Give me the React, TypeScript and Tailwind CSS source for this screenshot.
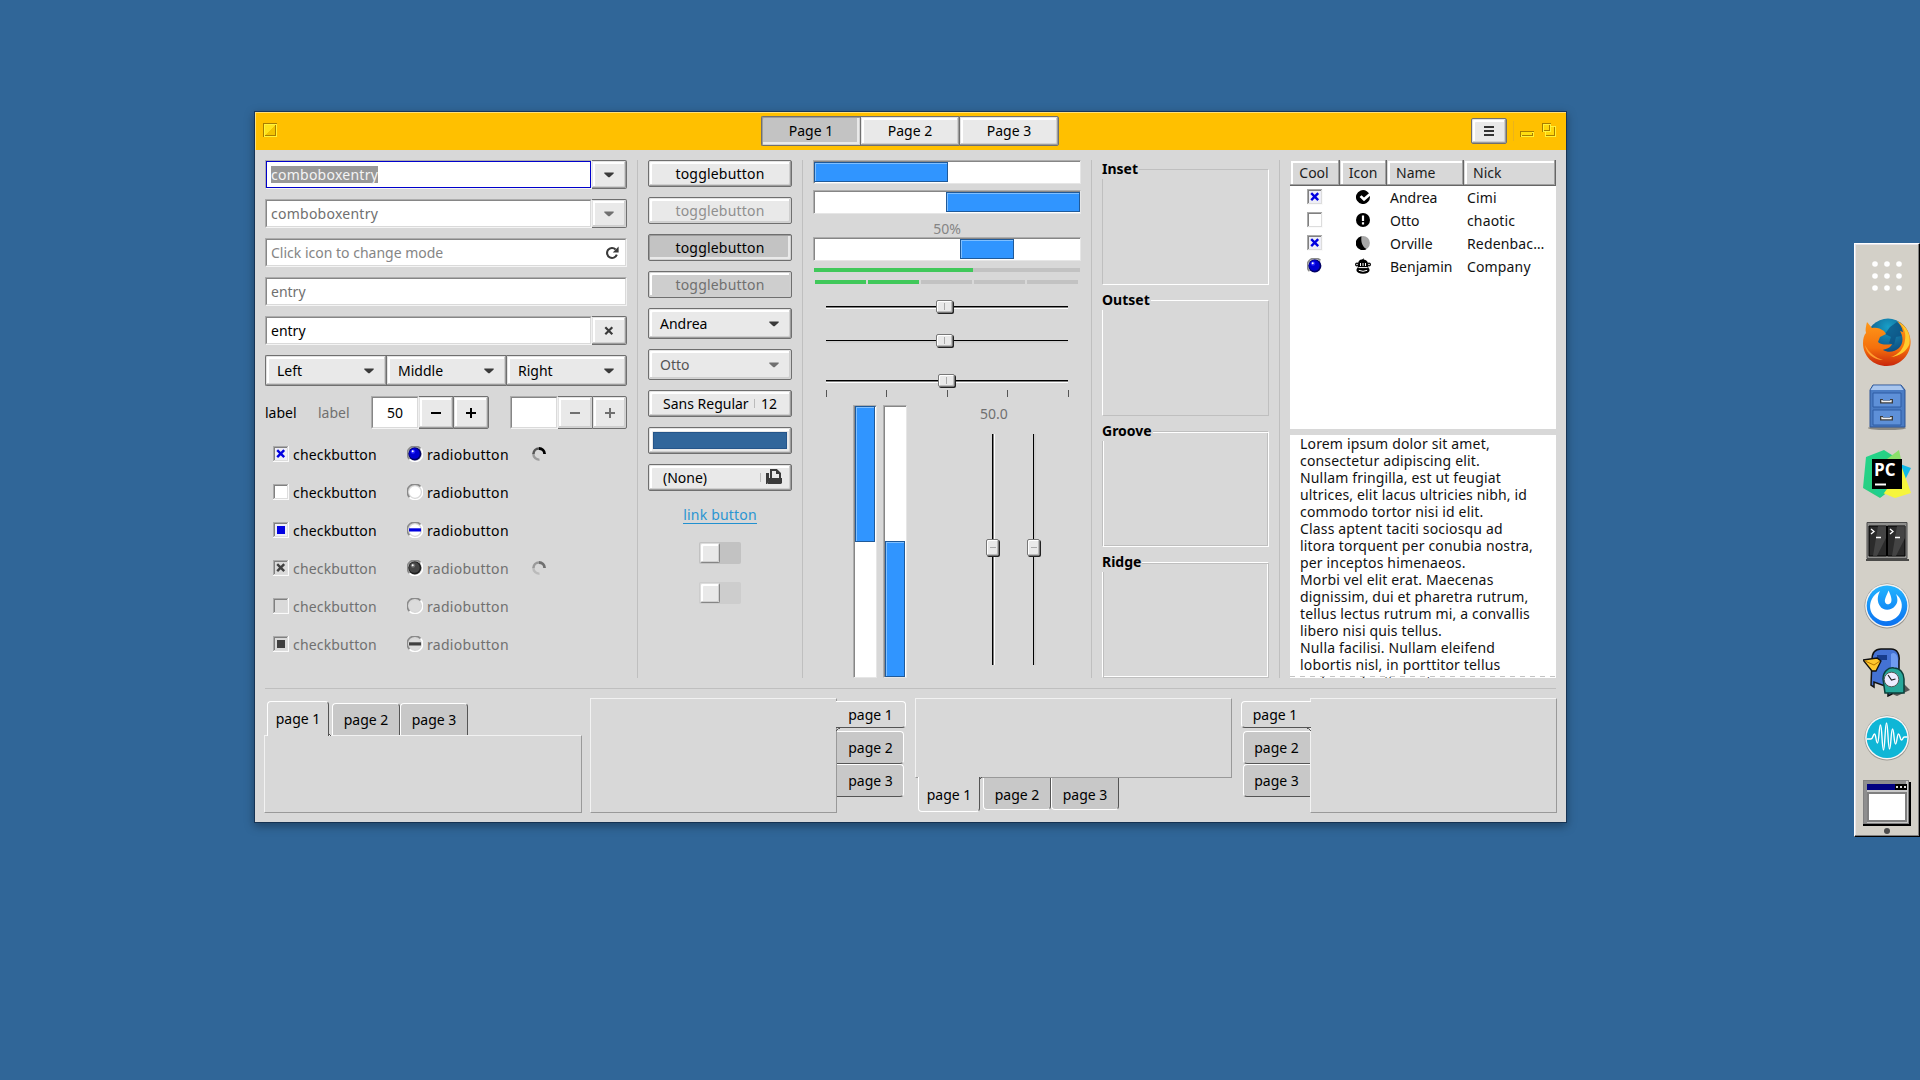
import React from "react";

type Kids = { children?: React.ReactNode; className?: string };

const RAISED =
  "border border-[#6f6f6f] rounded-[2px] bg-[#e9e9e9] shadow-[inset_-1px_-1px_0_#9c9c9c,inset_1px_1px_0_#e3e3e3,inset_-2px_-2px_0_#cfcfcf,inset_3px_3px_0_#ffffff]";
const FLAT =
  "border border-[#6f6f6f] rounded-[2px] bg-[#e9e9e9] shadow-[inset_-1px_-1px_0_#d2d2d2,inset_1px_1px_0_#e3e3e3,inset_-2px_-2px_0_#cfcfcf,inset_3px_3px_0_#ffffff]";
const PRESSED =
  "border border-[#6f6f6f] rounded-[2px] bg-[#c3c3c3] shadow-[inset_1px_1px_0_#9c9c9c,inset_-1px_-1px_0_#d0d0d0,inset_-3px_-3px_0_#e9e9e9]";
const PRESSED_OFF =
  "border border-[#6f6f6f] rounded-[2px] bg-[#cecece] shadow-[inset_1px_1px_0_#d2d2d2,inset_-2px_-2px_0_#cfcfcf,inset_3px_3px_0_#ffffff]";

function Button({ kind = RAISED, className = "", children }: Kids & { kind?: string }) {
  return <div className={`flex shrink-0 items-center ${kind} ${className}`}>{children}</div>;
}

function Well({ className = "", inner = "", children }: Kids & { inner?: string }) {
  return (
    <div className={`flex shrink-0 border border-t-[#adadad] border-l-[#adadad] border-r-[#f0f0f0] border-b-[#f4f4f4] ${className}`}>
      <div className={`flex min-w-0 flex-1 items-center border border-t-[#868686] border-l-[#868686] border-r-[#dadada] border-b-[#dadada] bg-white ${inner}`}>
        {children}
      </div>
    </div>
  );
}

function Arrow({ color = "#3a3a3a" }: { color?: string }) {
  return (
    <svg width="10" height="6" viewBox="0 0 10 6" className="shrink-0">
      <path d="M0.3 0.5h9.4v0.9L5.6 5.2h-1.2L0.3 1.4z" fill={color} />
    </svg>
  );
}

function Check({ state, off }: { state: "x" | "none" | "mixed"; off?: boolean }) {
  const ink = off ? "#404040" : "#0000e0";
  return (
    <svg width="16" height="16" viewBox="0 0 16 16" shapeRendering="crispEdges" className="shrink-0">
      <rect x="0" y="0" width="16" height="16" fill="#fafafa" />
      <rect x="0" y="0" width="15" height="15" fill="#aaaaaa" />
      <rect x="1" y="1" width="14" height="14" fill="#dddddd" />
      <rect x="1" y="1" width="13" height="13" fill="#808080" />
      <rect x="2" y="2" width="12" height="12" fill={off ? "#dadada" : state === "none" ? "#ffffff" : "#eeeef6"} />
      {state === "x" && <path d="M4.2 4.2l7 7M11.2 4.2l-7 7" stroke={ink} strokeWidth="2.4" shapeRendering="auto" />}
      {state === "mixed" && <rect x="4" y="4" width="8" height="8" fill={ink} />}
    </svg>
  );
}

function Radio({ state, off }: { state: "x" | "none" | "mixed"; off?: boolean }) {
  return (
    <svg width="16" height="16" viewBox="0 0 16 16" className="shrink-0">
      <path d="M13.6 2.4A7.2 7.2 0 1 1 2.4 13.2" fill="none" stroke="#ffffff" strokeWidth="1.4" />
      <path d="M2.4 13.2A7 7 0 0 1 13.4 2.4" fill="none" stroke="#8a8a8a" strokeWidth="1.6" />
      <circle cx="8" cy="8" r="5.8" fill={off ? "#dcdcdc" : "#ffffff"} />
      {state === "x" && (
        <>
          <circle cx="7.8" cy="7.8" r="6.6" fill={off ? "#1e1e1e" : "#000066"} />
          <circle cx="7.4" cy="7.4" r="5.3" fill={off ? "#454545" : "#0000d0"} />
          <circle cx="6" cy="5.6" r="2.2" fill={off ? "#707070" : "#2a2aff"} />
          <circle cx="5.7" cy="5.2" r="1" fill="#ffffff" />
        </>
      )}
      {state === "mixed" && <rect x="2" y="6.3" width="12" height="3.2" fill={off ? "#404040" : "#0000e0"} />}
    </svg>
  );
}

function Spinner({ color }: { color: string }) {
  return (
    <svg width="16" height="16" viewBox="0 0 16 16" className="ml-[22px]">
      <path d="M8 2.5A5.6 5.6 0 0 1 13.6 8" fill="none" stroke={color} strokeWidth="2.8" />
      <path d="M2.4 8A5.6 5.6 0 0 1 8 2.5" fill="none" stroke={color} strokeOpacity="0.6" strokeWidth="2.6" />
      <path d="M8.5 13.6A5.6 5.6 0 0 1 2.4 8" fill="none" stroke={color} strokeOpacity="0.28" strokeWidth="2.4" />
    </svg>
  );
}

function CheckRow({ state, off }: { state: "x" | "none" | "mixed"; off?: boolean }) {
  return (
    <div className={`flex h-[38px] items-center ${off ? "text-[#707070]" : "text-black"}`}>
      <div className="ml-2 flex w-[134px] items-center gap-1">
        <Check state={state} off={off} />
        <span className="tracking-[0.17px]">checkbutton</span>
      </div>
      <div className="flex w-[102px] items-center gap-1">
        <Radio state={state} off={off} />
        <span className="tracking-[0.3px]">radiobutton</span>
      </div>
      {state === "x" && <Spinner color={off ? "#707070" : "#000000"} />}
    </div>
  );
}

const VSep = () => <div className="mx-[10px] h-[518px] w-px shrink-0 bg-[#bfbfbf]" />;

function Inputs() {
  return (
    <div className="flex w-[362px] shrink-0 flex-col">
      <div className="flex flex-col gap-[10px]">
        <div className="flex h-[29px]">
          <Well className="w-[327px]" inner="!border-[#0000cc] pl-1">
            <span className="h-[17px] bg-[#989898] leading-[17px] tracking-[0.25px] text-[#f4f4f4]">comboboxentry</span>
          </Well>
          <Button className="w-[35px] justify-center rounded-l-none !border-l-0"><Arrow /></Button>
        </div>
        <div className="flex h-[29px] text-[#707070]">
          <Well className="w-[327px] tracking-[0.25px]" inner="pl-1">comboboxentry</Well>
          <Button kind={FLAT} className="w-[35px] justify-center rounded-l-none !border-l-0"><Arrow color="#707070" /></Button>
        </div>
        <Well className="h-[29px] text-[#858585]" inner="justify-between pl-1 pr-[6px]">
          <span>Click icon to change mode</span>
          <svg width="14" height="14" viewBox="0 0 14 14">
            <path d="M10.6 3.4A5 5 0 1 0 11.8 8.6" fill="none" stroke="#3a3a3a" strokeWidth="2.1" />
            <path d="M13.6 0.6v5.8H7.8z" fill="#3a3a3a" />
          </svg>
        </Well>
        <Well className="h-[29px] text-[#707070]" inner="pl-1">entry</Well>
        <div className="flex h-[29px]">
          <Well className="w-[327px]" inner="pl-1">entry</Well>
          <Button className="w-[35px] justify-center rounded-l-none !border-l-0">
            <svg width="10" height="10" viewBox="0 0 10 10"><path d="M1.3 1.3l7 7M8.3 1.3l-7 7" stroke="#3a3a3a" strokeWidth="2.2" /></svg>
          </Button>
        </div>
        <div className="flex h-[31px]">
          <Button className="w-[121px] justify-between rounded-r-none !border-r-0 pl-[11px] pr-3"><span>Left</span><Arrow /></Button>
          <Button className="w-[120px] justify-between rounded-none !border-r-0 pl-[11px] pr-3"><span>Middle</span><Arrow /></Button>
          <Button className="w-[121px] justify-between rounded-l-none pl-[11px] pr-3"><span>Right</span><Arrow /></Button>
        </div>
        <div className="flex h-[33px] items-center">
          <span className="w-[53px]">label</span>
          <span className="w-[53px] text-[#707070]">label</span>
          <Well className="h-[33px] w-[48px]" inner="justify-center">50</Well>
          <Button className="h-[33px] w-[34px] justify-center rounded-none !border-x-0">
            <svg width="10" height="10"><path d="M0 5h10" stroke="#000" strokeWidth="2" /></svg>
          </Button>
          <Button className="h-[33px] w-9 justify-center rounded-l-none pr-px">
            <svg width="10" height="10"><path d="M0 5h10M5 0v10" stroke="#000" strokeWidth="2" /></svg>
          </Button>
          <Well className="ml-[21px] h-[33px] w-[48px]" />
          <Button kind={FLAT} className="h-[33px] w-[34px] justify-center rounded-none !border-x-0">
            <svg width="10" height="10"><path d="M0 5h10" stroke="#707070" strokeWidth="2" /></svg>
          </Button>
          <Button kind={FLAT} className="h-[33px] w-[35px] justify-center rounded-l-none">
            <svg width="10" height="10"><path d="M0 5h10M5 0v10" stroke="#707070" strokeWidth="2" /></svg>
          </Button>
        </div>
      </div>
      <div className="mt-[6px] flex flex-col">
        <CheckRow state="x" />
        <CheckRow state="none" />
        <CheckRow state="mixed" />
        <CheckRow state="x" off />
        <CheckRow state="none" off />
        <CheckRow state="mixed" off />
      </div>
    </div>
  );
}

function Switch({ off }: { off?: boolean }) {
  return (
    <div className={`flex h-[22px] w-[42px] rounded-[2px] p-px ${off ? "bg-[#cdcdcd]" : "bg-[#c2c2c2]"}`}>
      <div className="h-5 w-5 rounded-[2px] border border-t-[#dddddd] border-l-[#dddddd] border-r-[#858585] border-b-[#858585] bg-[#e9e9e9] shadow-[inset_-1px_-1px_0_#cfcfcf,inset_2px_2px_0_#ffffff]" />
    </div>
  );
}

function Buttons() {
  return (
    <div className="flex w-[144px] shrink-0 flex-col gap-[10px]">
      <Button className="h-[27px] justify-center tracking-[0.2px]">togglebutton</Button>
      <Button kind={FLAT} className="h-[27px] justify-center tracking-[0.2px] text-[#8f8f8f]">togglebutton</Button>
      <Button kind={PRESSED} className="h-[27px] justify-center tracking-[0.2px]">togglebutton</Button>
      <Button kind={PRESSED_OFF} className="h-[27px] justify-center tracking-[0.2px] text-[#707070]">togglebutton</Button>
      <Button className="h-[31px] justify-between pl-[11px] pr-3"><span>Andrea</span><Arrow /></Button>
      <Button kind={FLAT} className="h-[31px] justify-between pl-[11px] pr-3 text-[#555555]"><span>Otto</span><Arrow color="#707070" /></Button>
      <Button className="h-[27px] pl-[14px]">
        <span className="w-[91px]">Sans Regular</span>
        <span className="mr-[6px] h-[9px] w-px bg-[#bbbbbb]" />
        <span>12</span>
      </Button>
      <Button className="h-[27px] px-1"><div className="h-[17px] flex-1 border border-[#25558a] bg-[#31669b]" /></Button>
      <Button className="h-[27px] pl-[14px]">
        <span className="w-[97px]">(None)</span>
        <span className="mr-[5px] h-[9px] w-px bg-[#bbbbbb]" />
        <svg width="17" height="16" viewBox="0 0 17 16" className="mb-0.5">
          <path d="M0 4h3v8l-2 3H0z" fill="#3a3a3a" />
          <path d="M5 9V1h5.5L14 4.5V9" fill="none" stroke="#3a3a3a" strokeWidth="2" />
          <path d="M10 1v4h4z" fill="#3a3a3a" />
          <path d="M3 9h13v4.6q0 1.4-1.4 1.4H1.6z" fill="#3a3a3a" />
        </svg>
      </Button>
      <div className="flex h-[31px] items-center justify-center pb-[3px]">
        <span className="border-b border-[#2090d0] leading-[17px] tracking-[0.2px] text-[#2a95d2]">link button</span>
      </div>
      <div className="flex flex-col items-center gap-[18px]"><Switch /><Switch off /></div>
    </div>
  );
}

const FILL = "shrink-0 border border-[#1f5a9a] bg-[#3095ff] shadow-[inset_1px_1px_0_#7fbfff]";

function HBar({ offset, fill, className = "" }: { offset: number; fill: number; className?: string }) {
  return (
    <div className={`flex h-6 w-[268px] shrink-0 border border-t-[#adadad] border-l-[#adadad] border-r-[#e6e6e6] border-b-[#e6e6e6] ${className}`}>
      <div className="flex flex-1 border-t border-[#868686] bg-white shadow-[inset_1px_0_0_#868686]">
        <div className={`h-5 ${FILL}`} style={{ marginLeft: offset, width: fill }} />
      </div>
    </div>
  );
}

function VBar({ offset }: { offset: number }) {
  return (
    <div className="h-[273px] w-6 border border-t-[#adadad] border-l-[#adadad] border-r-[#e6e6e6] border-b-[#e6e6e6]">
      <div className="flex h-full flex-col border-l border-[#868686] bg-white shadow-[inset_0_1px_0_#868686]">
        <div className={`h-[136px] w-5 ${FILL}`} style={{ marginTop: offset }} />
      </div>
    </div>
  );
}

const KNOB =
  "absolute rounded-[2px] border border-[#777777] bg-[#e9e9e9] flex items-center justify-center";

function HScale({ off, knob }: { off?: boolean; knob: number }) {
  return (
    <div className="relative ml-[13px] flex h-[14px] w-[242px] flex-col pt-[6px]">
      <div className="h-px bg-black" />
      <div className={off ? "h-px bg-[#cccccc]" : "h-px bg-[#808080]"} />
      <div className={off ? "h-px bg-[#d0d0d0]" : "h-px bg-white"} />
      <div
        className={`${KNOB} top-0 h-[13px] w-[17px] shadow-[inset_1px_1px_0_#ffffff,inset_-1px_-1px_0_#bbbbbb,1px_1px_0_#222222]`}
        style={{ left: knob }}
      >
        <span className="h-[7px] w-px bg-[#aaaaaa]" />
      </div>
    </div>
  );
}

function VScale({ off }: { off?: boolean }) {
  return (
    <div className="relative flex h-[231px] w-[14px] pl-[6px]">
      <div className="w-px bg-black" />
      <div className={off ? "w-px bg-[#cccccc]" : "w-px bg-[#808080]"} />
      <div className={off ? "w-px bg-[#d0d0d0]" : "w-px bg-white"} />
      <div className={`${KNOB} left-0 top-[105px] h-[17px] w-[13px] shadow-[inset_1px_1px_0_#ffffff,inset_-1px_-1px_0_#bbbbbb,1px_1px_0_#222222]`}>
        <span className="h-px w-[6px] bg-[#aaaaaa]" />
      </div>
    </div>
  );
}

function Ranges() {
  return (
    <div className="flex w-[268px] shrink-0 flex-col">
      <HBar offset={0} fill={134} />
      <HBar offset={132} fill={134} className="mt-[6px]" />
      <div className="mt-[6px] h-[17px] text-center leading-[18px] text-[#858585]">50%</div>
      <HBar offset={146} fill={54} />
      <div className="ml-px mt-[7px] flex h-1 w-[266px] bg-[#c2c2c2]"><div className="w-[159px] bg-[#40c85a]" /></div>
      <div className="ml-[2px] mt-2 flex h-1 gap-[2px]">
        {[1, 1, 0, 0, 0].map((on, i) => <div key={i} className={`w-[51px] ${on ? "bg-[#40c85a]" : "bg-[#c2c2c2]"}`} />)}
      </div>
      <div className="mt-4"><HScale knob={110} /></div>
      <div className="mt-5"><HScale knob={110} off /></div>
      <div className="mt-[26px]"><HScale knob={112} /></div>
      <div className="ml-[13px] mt-[2px] flex h-[7px]">
        <span className="w-px bg-[#555555]" />
        <span className="ml-[59px] w-px bg-[#555555]" />
        <span className="ml-[60px] w-px bg-[#555555]" />
        <span className="ml-[59px] w-px bg-[#555555]" />
        <span className="ml-[60px] w-px bg-[#555555]" />
      </div>
      <div className="mt-2 flex">
        <div className="ml-10 flex gap-[6px]"><VBar offset={0} /><VBar offset={135} /></div>
        <div className="ml-[73px] flex flex-col">
          <div className="h-[29px] w-[42px] leading-[18px] text-[#707070]">50.0</div>
          <div className="ml-[6px] flex gap-[27px]"><VScale /><VScale off /></div>
        </div>
      </div>
    </div>
  );
}

function Frame({ title, kind }: { title: string; kind: "inset" | "outset" | "groove" | "ridge" }) {
  const outer = {
    inset: "border-t-[#bfbfbf] border-l-[#bfbfbf] border-r-white border-b-white",
    outset: "border-t-white border-l-white border-r-[#bfbfbf] border-b-[#bfbfbf]",
    groove: "border-t-[#bfbfbf] border-l-[#bfbfbf] border-r-white border-b-white",
    ridge: "border-t-white border-l-white border-r-[#bfbfbf] border-b-[#bfbfbf]",
  }[kind];
  const inner = {
    inset: "",
    outset: "",
    groove: "shadow-[inset_1px_1px_0_#ffffff,inset_-1px_-1px_0_#bfbfbf]",
    ridge: "shadow-[inset_1px_1px_0_#bfbfbf,inset_-1px_-1px_0_#ffffff]",
  }[kind];
  return (
    <div className="flex flex-col">
      <div className="z-10 -mb-[10px] h-[19px] self-start bg-[#d8d8d8] pr-px font-bold leading-[17px]">{title}</div>
      <div className={`h-[116px] border ${outer} ${inner}`} />
    </div>
  );
}

const ROW_ICONS = [
  <svg key="c" width="14" height="14" viewBox="0 0 14 14">
    <path d="M10.8 1.2A7 7 0 1 0 13.9 6L8 11.2 3.6 7l1.9-1.8L8 7.6 13 3.2z" fill="#000" />
  </svg>,
  <svg key="e" width="14" height="14" viewBox="0 0 14 14">
    <circle cx="7" cy="7" r="7" fill="#000" /><path d="M5.9 2.4h2.2v5.6H5.9zM5.9 9.3h2.2v2.2H5.9z" fill="#fff" />
  </svg>,
  <svg key="m" width="14" height="14" viewBox="0 0 14 14">
    <circle cx="7" cy="7" r="6.9" fill="#a8a8a8" /><path d="M5.5 0.2A7 7 0 1 0 10.5 13C6.5 11 4.6 6 5.5 0.2z" fill="#000" />
  </svg>,
  <svg key="b" width="16" height="16" viewBox="0 0 16 16">
    <path d="M7 1.5L9 .2l-.4 1.400C11.500 1.800 13 3.600 13 6v3H3V6c0-2.600 1.600-4.500 4-4.500z" fill="#000" />
    <circle cx="2" cy="6.500" r="1.400" fill="#fff" stroke="#000" strokeWidth="1.200" />
    <circle cx="14" cy="6.500" r="1.400" fill="#fff" stroke="#000" strokeWidth="1.200" />
    <path d="M5 5h1v3H5zM7.500 5h1v3h-1zM10 5h1v3h-1z" fill="#fff" />
    <ellipse cx="8" cy="11.900" rx="6.600" ry="3.900" fill="#000" />
    <path d="M3.500 9.600h9M3.800 12.300q4.200 2 8.400 0" stroke="#fff" strokeWidth="1" fill="none" />
  </svg>,
];

const PEOPLE = [
  { on: true, name: "Andrea", nick: "Cimi" },
  { on: false, name: "Otto", nick: "chaotic" },
  { on: true, name: "Orville", nick: "Redenbac…" },
  { on: true, radio: true, name: "Benjamin", nick: "Company" },
];

const LINES = [
  "Lorem ipsum dolor sit amet,", "consectetur adipiscing elit.", "Nullam fringilla, est ut feugiat",
  "ultrices, elit lacus ultricies nibh, id", "commodo tortor nisi id elit.", "Class aptent taciti sociosqu ad",
  "litora torquent per conubia nostra,", "per inceptos himenaeos.", "Morbi vel elit erat. Maecenas",
  "dignissim, dui et pharetra rutrum,", "tellus lectus rutrum mi, a convallis", "libero nisi quis tellus.",
  "Nulla facilisi. Nullam eleifend", "lobortis nisl, in porttitor tellus", "malesuada sit amet.",
];

const HEAD =
  "flex h-[26px] items-center bg-[#d8d8d8] pb-px border-r border-b border-[#666666] shadow-[inset_-1px_-1px_0_#a0a0a0,inset_1px_1px_0_#d8d8d8,inset_3px_3px_0_#ffffff]";

function Lists() {
  return (
    <div className="flex w-[266px] shrink-0 flex-col gap-[6px]">
      <div className="h-[269px] bg-white">
        <div className="flex text-[#1c1c1c]">
          <div className={`${HEAD} w-[50px] justify-center pr-px`}>Cool</div>
          <div className={`${HEAD} w-[47px] justify-center`}>Icon</div>
          <div className={`${HEAD} w-[77px] pl-[9px]`}>Name</div>
          <div className={`${HEAD} w-[92px] pl-[9px]`}>Nick</div>
        </div>
        {PEOPLE.map((p, i) => (
          <div key={p.name} className="flex h-[23px] items-center text-[#111111]">
            <div className="flex w-[50px] justify-center pb-px">
              {p.radio ? <Radio state="x" /> : <Check state={p.on ? "x" : "none"} />}
            </div>
            <div className="flex w-[47px] justify-center pb-px pr-px">{ROW_ICONS[i]}</div>
            <div className="w-[77px] pl-[3px]">{p.name}</div>
            <div className="pl-[3px] tracking-[0.15px]">{p.nick}</div>
          </div>
        ))}
      </div>
      <div className="relative h-[243px] overflow-hidden bg-white pl-[10px] tracking-[0.16px] text-[#111111]">
        {LINES.map((l) => <div key={l} className="h-[17px] whitespace-nowrap leading-[18px]">{l}</div>)}
        <div className="absolute inset-x-0 bottom-px h-px bg-[repeating-linear-gradient(90deg,#c4c4c4_0_5px,#ffffff_5px_10px)]" />
      </div>
    </div>
  );
}

const PANEL = "border border-t-[#f2f2f2] border-l-[#f2f2f2] border-r-[#999999] border-b-[#999999]";
const TAB_TEXT = "flex items-center justify-center";

function TopTabs() {
  return (
    <div className="flex w-[318px] flex-col pt-[3px]">
      <div className="flex h-[34px] items-end pl-[3px]">
        <div className={`${TAB_TEXT} relative z-10 -mb-px mr-[3px] h-[35px] w-[62px] rounded-t-[4px] border-t border-l border-r border-t-white border-l-white border-r-[#555555] bg-[#d8d8d8] pb-[2px]`}>
          page 1
          <svg width="3" height="4" className="absolute -right-[3px] bottom-0"><path d="M.5 0v1.500L3 4" stroke="#555" fill="none" /></svg>
        </div>
        <div className={`${TAB_TEXT} h-8 w-[68px] rounded-t-[4px] border-t border-l border-r border-t-white border-l-white border-r-[#555555] bg-[#c8c8c8] pb-px`}>page 2</div>
        <div className={`${TAB_TEXT} h-8 w-[68px] rounded-t-[4px] border-t border-l border-r border-t-white border-l-white border-r-[#555555] bg-[#c8c8c8] pb-px`}>page 3</div>
      </div>
      <div className={`h-[78px] ${PANEL}`} />
    </div>
  );
}

function BottomTabs() {
  return (
    <div className="flex w-[317px] flex-col">
      <div className={`h-[80px] ${PANEL}`} />
      <div className="flex h-[34px] items-start pl-[3px]">
        <div className={`${TAB_TEXT} relative z-10 -mt-px mr-[3px] h-[35px] w-[62px] rounded-b-[4px] border-b border-l border-r border-b-white border-l-white border-r-[#555555] bg-[#d8d8d8] pt-px`}>
          page 1
          <svg width="3" height="4" className="absolute -right-[3px] top-0"><path d="M.5 4V2.500L3 0" stroke="#555" fill="none" /></svg>
        </div>
        <div className={`${TAB_TEXT} h-8 w-[68px] rounded-b-[4px] border-b border-l border-r border-b-white border-l-white border-r-[#555555] bg-[#c8c8c8] pt-px`}>page 2</div>
        <div className={`${TAB_TEXT} h-8 w-[68px] rounded-b-[4px] border-b border-l border-r border-b-white border-l-white border-r-[#555555] bg-[#c8c8c8] pt-px`}>page 3</div>
      </div>
    </div>
  );
}

function RightTabs() {
  return (
    <div className="flex w-[316px]">
      <div className={`h-[115px] w-[247px] ${PANEL}`} />
      <div className="flex flex-col items-start pt-[3px]">
        <div className={`${TAB_TEXT} relative z-10 -ml-px mb-[3px] h-[27px] w-[70px] rounded-r-[4px] border-t border-b border-r border-t-white border-b-[#555555] border-r-white bg-[#d8d8d8]`}>
          page 1
          <svg width="4" height="3" className="absolute -bottom-[4px] left-0"><path d="M4 .5H2.500L0 3" stroke="#555" fill="none" /></svg>
        </div>
        <div className={`${TAB_TEXT} h-[33px] w-[67px] rounded-r-[4px] border-t border-b border-r border-t-white border-b-[#555555] border-r-white bg-[#c8c8c8] pl-px`}>page 2</div>
        <div className={`${TAB_TEXT} h-[33px] w-[67px] rounded-r-[4px] border-t border-b border-r border-t-white border-b-[#555555] border-r-white bg-[#c8c8c8] pl-px`}>page 3</div>
      </div>
    </div>
  );
}

function LeftTabs() {
  return (
    <div className="flex w-[316px]">
      <div className="flex flex-col items-end pt-[3px]">
        <div className={`${TAB_TEXT} relative z-10 -mr-px mb-[3px] h-[27px] w-[70px] rounded-l-[4px] border-t border-b border-l border-t-white border-b-[#555555] border-l-white bg-[#d8d8d8] pr-[3px]`}>
          page 1
          <svg width="4" height="3" className="absolute -bottom-[4px] right-0"><path d="M0 .5h1.500L4 3" stroke="#555" fill="none" /></svg>
        </div>
        <div className={`${TAB_TEXT} h-[33px] w-[67px] rounded-l-[4px] border-t border-b border-l border-t-white border-b-[#555555] border-l-white bg-[#c8c8c8] pr-px`}>page 2</div>
        <div className={`${TAB_TEXT} h-[33px] w-[67px] rounded-l-[4px] border-t border-b border-l border-t-white border-b-[#555555] border-l-white bg-[#c8c8c8] pr-px`}>page 3</div>
      </div>
      <div className={`h-[115px] w-[247px] ${PANEL}`} />
    </div>
  );
}

function TitleBar() {
  return (
    <div className="flex h-[38px] shrink-0 items-start border-t border-l border-[#ffe07a] bg-[#ffc000]">
      <svg width="14" height="14" viewBox="0 0 14 14" shapeRendering="crispEdges" className="ml-[7px] mt-[10px]">
        <path d="M0 0h14v14H0z" fill="#fff23a" /><path d="M0 0h14v1H1v13H0z" fill="#a87d00" />
        <path d="M1 1h12v12H1z" fill="#fff23a" /><path d="M2 2h11v11H2z" fill="#a87d00" />
        <path d="M2 2h10v10H2z" fill="#ffe21a" /><path d="M12 2v10H2z" fill="#f2c200" />
      </svg>
      <div className="ml-[484px] mt-[3px] flex h-[30px]">
        <Button kind={PRESSED} className="w-[99px] justify-center rounded-r-none !border-r-0 pb-px">Page 1</Button>
        <Button className="w-[99px] justify-center rounded-none !border-r-0 pb-px">Page 2</Button>
        <Button className="w-[100px] justify-center rounded-l-none pb-px">Page 3</Button>
      </div>
      <Button className="ml-[412px] mt-[5px] h-[26px] w-9 justify-center">
        <svg width="10" height="10" shapeRendering="crispEdges"><path d="M0 1h10M0 5h10M0 9h10" stroke="#333" strokeWidth="2" /></svg>
      </Button>
      <div className="ml-[6px] mt-2 h-5 w-px bg-[#ebb41a]" />
      <svg width="14" height="6" viewBox="0 0 14 6" shapeRendering="crispEdges" className="ml-[6px] mt-[18px]">
        <path d="M0 0h14v6H0z" fill="#fff23a" /><path d="M0 0h14v1H1v5H0z" fill="#a87d00" />
        <path d="M2 2h11v3H2z" fill="#a87d00" /><path d="M1 1h11v3H1z" fill="#ffdd10" />
      </svg>
      <svg width="14" height="14" viewBox="0 0 14 14" shapeRendering="crispEdges" className="ml-2 mt-[10px]">
        <path d="M3 3h11v11H3z" fill="#fff23a" /><path d="M4 4h9v9H4z" fill="#a87d00" /><path d="M4 4h8v8H4z" fill="#ffd60a" />
        <path d="M0 0h9v9H0z" fill="#fff23a" /><path d="M0 0h9v1H1v8H0z" fill="#a87d00" />
        <path d="M2 2h6v6H2z" fill="#a87d00" /><path d="M2 2h5v5H2z" fill="#ffd60a" />
      </svg>
    </div>
  );
}

function Dock() {
  return (
    <div className="fixed right-0 top-[243px] flex h-[594px] w-[66px] flex-col items-center border-t border-l border-r border-b border-t-white border-l-white border-r-black border-b-black bg-[#d3d0c8] shadow-[inset_-1px_-1px_0_#808080,inset_1px_1px_0_#e8e4e8]">
      <svg width="30" height="30" viewBox="0 0 30 30" className="mt-[17px]">
        {[3, 15, 27].map((y) => [3, 15, 27].map((x) => <circle key={`${x}-${y}`} cx={x} cy={y} r="2.8" fill="#fff" />))}
      </svg>
      <svg width="48" height="48" viewBox="0 0 48 48" className="mt-[27px]">
        <defs>
          <radialGradient id="globe" cx="0.5" cy="0.2" r="0.8"><stop offset="0" stopColor="#18a0c8" /><stop offset="1" stopColor="#0a2f66" /></radialGradient>
          <linearGradient id="fox" x1="0" y1="0" x2="0" y2="1"><stop offset="0" stopColor="#ff9a1a" /><stop offset="0.6" stopColor="#f5700c" /><stop offset="1" stopColor="#c8260c" /></linearGradient>
        </defs>
        <circle cx="25" cy="22" r="21.500" fill="url(#globe)" />
        <path d="M27 9l7-5 8 8-4 6-5 1-2 8-5-2 2-6-6-3z" fill="#0b4f80" opacity="0.7" />
        <path d="M4 4l5 6c4-1 8 0 12 3l2 3-6 3-2 5c3 3 9 3 14 2-1 4-7 5-9 6 5 3 12 2 16-2 5-5 4-12 1-17l3 1c-1-5-3-8-6-11 8 3 13 11 13.600 20C48 37 37 48 24 48 10 48 0 38 0 25c0-4 1-8 3-10C2 12 3 8 4 4z" fill="url(#fox)" />
        <path d="M36 5c6 5 7 12 6 17-1 9-7 15-14 17 9-1 16-6 18.500-13C48 16 43 8 36 5z" fill="#ffcb2e" />
        <path d="M2 27c1 8 8 15 18 15-7-2-14-7-18-15z" fill="#ff9f30" />
      </svg>
      <svg width="38" height="46" viewBox="0 0 38 46" className="mt-[18px]">
        <ellipse cx="19" cy="44" rx="19" ry="2.200" fill="#8b8983" />
        <path d="M5 1h28l4 5v37H2V6z" fill="#4a7cc4" stroke="#2c5596" />
        <path d="M5.500 1.500h27l3 4.500h-33z" fill="#a9c6ee" />
        <path d="M5 9h28v14H5zM5 26h28v15H5z" fill="#5e90d8" stroke="#2f5da4" />
        <path d="M13.500 15v3h10v-3M13.500 32v3h10v-3" fill="none" stroke="#3c3c3c" strokeWidth="3" />
        <path d="M14 16v1.500h9V16M14 33v1.500h9V33" fill="none" stroke="#f2f2f2" strokeWidth="1.300" />
      </svg>
      <svg width="48" height="48" viewBox="0 0 48 48" className="mt-[20px]">
        <defs><linearGradient id="pc" x1="0" y1="0" x2="1" y2="1"><stop offset="0" stopColor="#20d68c" /><stop offset="1" stopColor="#30c878" /></linearGradient></defs>
        <path d="M3 7L21 0l11 7 2 28-17 13L0 38z" fill="url(#pc)" />
        <path d="M37 14l11 4-6 12z" fill="#10b8e8" />
        <path d="M24 9L36 0l3 14-10 8z" fill="#8be06a" />
        <path d="M38 15l10 28-16 5-17-7 6-22z" fill="#f6f53c" />
        <path d="M15 37l-5 5 8 5 6-8z" fill="#1fcf90" />
        <path d="M9 9h30v30H9z" fill="#000" />
        <text x="11" y="25.500" fontFamily="Open Sans" fontWeight="700" fontSize="17" letterSpacing="0" fill="#fff">PC</text>
        <path d="M12 33.500h11v2H12z" fill="#fff" />
      </svg>
      <svg width="43" height="40" viewBox="0 0 43 40" className="mt-[24px]">
        <path d="M0 37h43v2H0z" fill="#4a4a48" />
        <path d="M1 .5h40v36H1z" fill="#8f8f8d" stroke="#4b4b4b" />
        <path d="M3 4h17.500v30H3zM21.500 4H39v30H21.500z" fill="#2b2b2b" stroke="#000" />
        <path d="M12 4h8v12l-9 18H7zM31 4h8v12l-9 18h-4z" fill="#555" opacity="0.6" />
        <path d="M5 7l3 2.500L5 12M24 7l3 2.500-3 2.500M10 15.500h5M29 15.500h5" fill="none" stroke="#fff" strokeWidth="1.300" />
      </svg>
      <svg width="46" height="46" viewBox="0 0 46 46" className="mt-[21px]">
        <defs><linearGradient id="mm" x1="0" y1="0" x2="0" y2="1"><stop offset="0" stopColor="#22b4ff" /><stop offset="1" stopColor="#0a70f0" /></linearGradient></defs>
        <circle cx="23" cy="23" r="22.500" fill="#96948e" /><circle cx="23" cy="22.700" r="21.800" fill="#f2f2f2" /><circle cx="23" cy="22.700" r="20.300" fill="url(#mm)" />
        <path d="M16 8C5 14 3 27 11 34c8 7 20 5 25-4 4-8 1-15-4-19 2 5 2 9-1 12-4 5-12 5-15 0-3-4-3-10 0-15z" fill="#fff" />
        <path d="M24.500 7.500c2 4 4 9 2.500 12-1.500 2.500-5 2.500-6-.5-.700-3 2-7 3.500-11.500z" fill="#fff" />
      </svg>
      <svg width="48" height="49" viewBox="0 0 48 49" className="mt-[19px]">
        <path d="M24 44l10 4 13-6-8-8z" fill="#555" />
        <path d="M9 12C9 4 13 1 18 1h10c6 0 9 5 8 12v22l-7 2v9l-4 2v-9l-14-5v5l-3-2z" fill="#4472d4" stroke="#111" strokeWidth="1.500" />
        <path d="M28 6c4-3 7 1 7 8v20l-7 2z" fill="#6f9bf0" />
        <path d="M14 7h10v5H14z" fill="#173c8c" />
        <path d="M0 12l14-2 4 3-5 10H9z" fill="#ffc62c" stroke="#111" strokeWidth="1.300" />
        <path d="M2 13l9 4 6-4" fill="none" stroke="#b57400" />
        <path d="M20 31c0-7 5-12 11-11 6 0 10 5 10 11v14H22z" fill="#27a79a" stroke="#0c3f3a" strokeWidth="1.500" />
        <circle cx="28.500" cy="31.500" r="7.300" fill="#ececff" stroke="#555" />
        <path d="M25 27l3.500 5 4-1" fill="none" stroke="#222" strokeWidth="1.200" />
      </svg>
      <svg width="46" height="46" viewBox="0 0 46 46" className="mt-[18px]">
        <circle cx="23" cy="23" r="22.500" fill="#9a9892" /><circle cx="23" cy="22.700" r="21.800" fill="#f6f6f6" /><circle cx="23" cy="22.700" r="20.300" fill="#0fb6d6" />
        <path d="M3 24h4c2 0 2-5 3.500-5s1.500 9 3 9 1.500-18 3-18 1.500 25 3 25 1.500-27 3-27 1.500 26 3 26 1.500-20 3-20 1.500 15 3 15 1.500-10 3-10 1.500 6 3 6 1-3 3-3h3" fill="none" stroke="#fff" strokeWidth="1.400" />
      </svg>
      <svg width="48" height="46" viewBox="0 0 48 46" shapeRendering="crispEdges" className="mt-[19px]">
        <path d="M2 2h46v44H0v-2h2z" fill="#000" /><path d="M0 0h46v44H0z" fill="#808080" /><path d="M1 1h44v42H1z" fill="#c8c8c8" />
        <path d="M1 1h42v3H4v39H1z" fill="#8e8e8e" />
        <path d="M4 4h40v6H4z" fill="#000080" /><path d="M32 4h12v6H32z" fill="#000" /><path d="M33 6h2v2h-2zM37 6h2v2h-2zM41 6h2v2h-2z" fill="#ddd" />
        <path d="M4 12h40v30H4z" fill="#808080" /><path d="M6 14h36v26H6z" fill="#fff" />
      </svg>
      <div className="mt-[2px] h-[6px] w-[6px] rounded-full bg-[#4c4c4c]" />
    </div>
  );
}

export default function App() {
  return (
    <div className="h-[1080px] w-[1920px] overflow-hidden bg-[#306698] pl-[255px] pt-[112px] font-['Noto_Sans',sans-serif] text-[14px] leading-[19px] text-black">
      <div className="flex h-[710px] w-[1311px] flex-col bg-[#d8d8d8] shadow-[0_0_0_1px_rgba(15,40,70,0.7),0_3px_9px_1px_rgba(0,0,0,0.35)]">
        <TitleBar />
        <div className="flex pl-[10px] pt-[10px]">
          <Inputs /><VSep /><Buttons /><VSep /><Ranges /><VSep />
          <div className="flex w-[167px] shrink-0 flex-col gap-[6px]">
            <Frame title="Inset" kind="inset" />
            <Frame title="Outset" kind="outset" />
            <Frame title="Groove" kind="groove" />
            <Frame title="Ridge" kind="ridge" />
          </div>
          <VSep /><Lists />
        </div>
        <div className="mx-[10px] mb-[9px] mt-[10px] h-px shrink-0 bg-[#bfbfbf]" />
        <div className="flex pl-[9px]">
          <TopTabs />
          <div className="ml-2"><RightTabs /></div>
          <div className="ml-[9px]"><BottomTabs /></div>
          <div className="ml-[9px]"><LeftTabs /></div>
        </div>
      </div>
      <Dock />
    </div>
  );
}
